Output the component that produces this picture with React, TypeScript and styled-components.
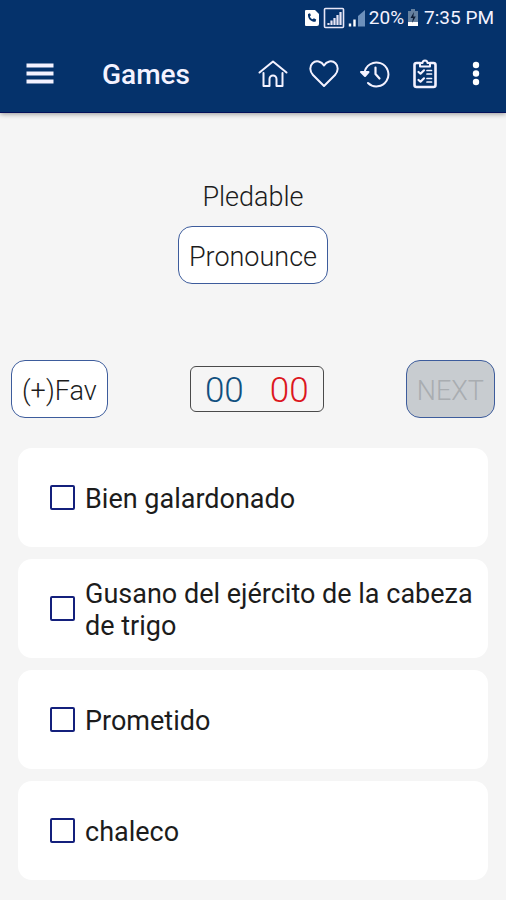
import React, { useState } from "react";
import styled, { createGlobalStyle } from "styled-components";

const GlobalStyle = createGlobalStyle`
  *, *::before, *::after { box-sizing: border-box; }
  body {
    margin: 0;
    background: #f5f5f5;
    color: #1c1c1c;
    font-family: Roboto, sans-serif;
  }
  button, input { font: inherit; color: inherit; margin: 0; }
`;

const Header = styled.header`
  background: #05326b;
  color: #f4f2ff;
  border-bottom: 1px solid #04105a;
  box-shadow: 0 1px 5px rgba(0, 0, 0, 0.4);
`;

const StatusBar = styled.div`
  display: flex;
  justify-content: flex-end;
  align-items: center;
  height: 36px;
  padding: 0 12px;
  gap: 3px;
  font-size: 19px;
  line-height: 24px;
`;

const Clock = styled.time`
  padding-left: 2px;
`;

const Toolbar = styled.div`
  display: flex;
  align-items: center;
  height: 76px;
  padding: 0 5px 0 14px;
`;

const Title = styled.h1`
  flex: 1;
  margin: 0;
  padding: 2px 0 0 37px;
  font-size: 28px;
  line-height: 32px;
  font-weight: 500;
`;

const IconButton = styled.button`
  display: flex;
  justify-content: center;
  align-items: center;
  width: 51px;
  height: 48px;
  padding: 0;
  border: 0;
  background: none;
`;

const Word = styled.section`
  display: flex;
  flex-direction: column;
  align-items: center;
  gap: 13px;
  padding: 68px 16px 76px;
`;

const Term = styled.p`
  margin: 0;
  font-size: 27px;
  line-height: 32px;
  font-weight: 300;
`;

const OutlineButton = styled.button`
  height: 58px;
  padding: 4px 10px 0;
  border: 1px solid #3d5c9c;
  border-radius: 14px;
  background: #fff;
  font-size: 27px;
  line-height: 32px;
  font-weight: 300;

  &:disabled {
    background: #c8ccd0;
    color: #a9adb1;
  }
`;

const Actions = styled.section`
  display: flex;
  justify-content: space-between;
  align-items: center;
  padding: 0 11px;
`;

const ScoreBox = styled.div`
  display: flex;
  align-items: center;
  gap: 26px;
  height: 46px;
  padding: 4px 14px 0;
  border: 1px solid #4a4a4a;
  border-radius: 6px;
`;

const Score = styled.span<{ $tone: string }>`
  color: ${({ $tone }) => $tone};
  font-size: 35px;
  line-height: 40px;
  font-weight: 300;
`;

const Answers = styled.fieldset`
  display: flex;
  flex-direction: column;
  gap: 12px;
  margin: 0;
  padding: 30px 18px 18px;
  border: 0;
  min-width: 0;
`;

const Answer = styled.label`
  display: flex;
  align-items: center;
  gap: 10px;
  min-height: 99px;
  padding: 16px 8px 16px 32px;
  border-radius: 14px;
  background: #fff;
  font-size: 27px;
  line-height: 32px;
`;

const AnswerText = styled.span`
  padding-top: 3px;
`;

const Tick = styled.input`
  appearance: none;
  flex: none;
  width: 25px;
  height: 25px;
  border: 2px solid #14207c;
  border-radius: 2px;
  background: #fff;

  &:checked {
    background: #14207c;
    box-shadow: inset 0 0 0 3px #fff;
  }
`;

const stroke = {
  fill: "none",
  stroke: "currentColor",
  strokeWidth: 2,
  strokeLinecap: "round" as const,
  strokeLinejoin: "round" as const,
};

const CallIcon = () => (
  <svg width="16" height="18" viewBox="0 0 16 18" aria-hidden="true">
    <path d="M2 1h9l4 4v10a2 2 0 0 1-2 2H2a1 1 0 0 1-1-1V2a1 1 0 0 1 1-1z" fill="#fff" />
    <path d="M4 5c-.4 5 3 8 7.500 7.800l.7-2.300-2.300-1.200-1.300 1C7 9.600 6.200 8.600 5.900 7.500l1-1.200L6 4.200z" fill="#05326b" />
  </svg>
);

const BoxedSignalIcon = () => (
  <svg width="22" height="22" viewBox="0 0 22 22" aria-hidden="true">
    <rect x="1.500" y="1.500" width="19" height="19" rx="1" fill="none" stroke="#e8e6f7" strokeWidth="1.600" />
    <path d="M5.500 18v-2M8.500 18v-4.500M11.500 18v-7M14.500 18V8M17.500 18V5" stroke="#e8e6f7" strokeWidth="2.200" />
  </svg>
);

const SignalIcon = () => (
  <svg width="18" height="20" viewBox="0 0 18 20" aria-hidden="true">
    <path d="M2 18.500v-3M6.500 18.500v-7" stroke="#fff" strokeWidth="2.400" />
    <path d="M10 18.500V8L17 2v16.500z" fill="#6d90bb" />
  </svg>
);

const BatteryIcon = () => (
  <svg width="12" height="18" viewBox="0 0 12 18" aria-hidden="true">
    <path d="M4 0h4v2h3v11H1V2h3z" fill="#65809f" />
    <path d="M1 13h10v4H1z" fill="#fff" />
    <path d="M7 3 3.500 9H6l-1 5 3.800-6.500H6.300z" fill="#0c1c36" />
  </svg>
);

const MenuIcon = () => (
  <svg width="28" height="24" viewBox="0 0 28 24" aria-hidden="true">
    <path d="M.5 3.500h27M.5 11.500h27M.5 19.500h27" stroke="currentColor" strokeWidth="3.800" />
  </svg>
);

const HomeIcon = () => (
  <svg width="32" height="32" viewBox="0 0 32 32" aria-hidden="true" {...stroke}>
    <path d="M3.500 14.500 17 3.500l13.500 11" />
    <path d="M7.500 15v13h6v-7a3.500 3.500 0 0 1 7 0v7h6V15" />
  </svg>
);

const HeartIcon = () => (
  <svg width="32" height="32" viewBox="0 0 32 32" aria-hidden="true" {...stroke}>
    <path d="M17 28 6 17C2.500 13.500 2.500 8 5.500 5.200c3.500-3.300 9-2 11.500 2.300 2.500-4.300 8-5.600 11.500-2.300C31.500 8 31.500 13.500 28 17z" />
  </svg>
);

const HistoryIcon = () => (
  <svg width="32" height="32" viewBox="0 0 32 32" aria-hidden="true" {...stroke}>
    <path d="M6.500 15A12 12 0 1 1 10 25" />
    <path d="M17.500 9.500V16l4 4.500" strokeWidth="2.200" />
    <path d="M3 14h7.500L7 18z" fill="currentColor" />
  </svg>
);

const ChecklistIcon = () => (
  <svg width="32" height="32" viewBox="0 0 32 32" aria-hidden="true" {...stroke}>
    <path d="M11 5H7.500A2 2 0 0 0 5.500 7v20a2 2 0 0 0 2 2h17a2 2 0 0 0 2-2V7a2 2 0 0 0-2-2H21" strokeWidth="2.600" />
    <path d="M11 5h2.500a2.500 2.500 0 0 1 5 0H21v3.500H11z" />
    <path d="m9.500 14 2 1.700 3.500-3.400M9.500 22l2 1.700 3.500-3.400" strokeWidth="2.200" />
    <path d="M18 12.500h4.500M18 16h4.500M18 20.500h4.500M18 24h4.500" strokeWidth="1.700" />
  </svg>
);

const MoreIcon = () => (
  <svg width="8" height="26" viewBox="0 0 8 26" fill="#fff" aria-hidden="true">
    <circle cx="4" cy="4" r="3.200" />
    <circle cx="4" cy="12.500" r="3.200" />
    <circle cx="4" cy="21" r="3.200" />
  </svg>
);

const tools = [
  { label: "Home", Icon: HomeIcon },
  { label: "Favourites", Icon: HeartIcon },
  { label: "History", Icon: HistoryIcon },
  { label: "Quiz", Icon: ChecklistIcon },
  { label: "More options", Icon: MoreIcon },
];

const answers = [
  "Bien galardonado",
  "Gusano del ejército de la cabeza de trigo",
  "Prometido",
  "chaleco",
];

export default function App() {
  const [picked, setPicked] = useState<string | null>(null);

  return (
    <>
      <GlobalStyle />
      <Header>
        <StatusBar>
          <CallIcon />
          <BoxedSignalIcon />
          <SignalIcon />
          <span>20%</span>
          <BatteryIcon />
          <Clock>7:35 PM</Clock>
        </StatusBar>
        <Toolbar>
          <IconButton type="button" aria-label="Menu">
            <MenuIcon />
          </IconButton>
          <Title>Games</Title>
          {tools.map(({ label, Icon }) => (
            <IconButton key={label} type="button" aria-label={label}>
              <Icon />
            </IconButton>
          ))}
        </Toolbar>
      </Header>
      <main>
        <Word>
          <Term>Pledable</Term>
          <OutlineButton type="button">Pronounce</OutlineButton>
        </Word>
        <Actions>
          <OutlineButton type="button">(+)Fav</OutlineButton>
          <ScoreBox>
            <Score $tone="#11507f">00</Score>
            <Score $tone="#dc1620">00</Score>
          </ScoreBox>
          <OutlineButton type="button" disabled={picked === null}>
            NEXT
          </OutlineButton>
        </Actions>
        <Answers aria-label="Answers">
          {answers.map((text) => (
            <Answer key={text}>
              <Tick
                type="checkbox"
                checked={picked === text}
                onChange={() => setPicked(picked === text ? null : text)}
              />
              <AnswerText>{text}</AnswerText>
            </Answer>
          ))}
        </Answers>
      </main>
    </>
  );
}
